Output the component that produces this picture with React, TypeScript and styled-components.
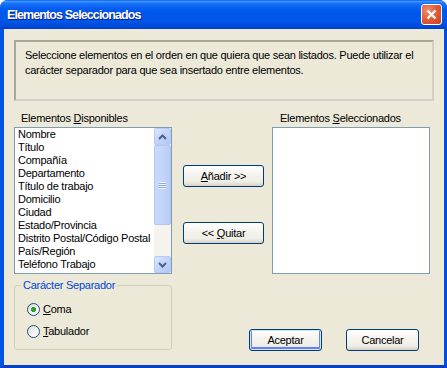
import styled, { createGlobalStyle } from 'styled-components';

const GlobalStyle = createGlobalStyle`
    html, body {
        margin: 0;
        padding: 0;
        background: #ffffff;
    }
    body {
        font-family: "Liberation Sans", Arial, sans-serif;
        font-size: 11px;
        letter-spacing: -0.25px;
        color: #000000;
    }
`;

const available = [
    'Nombre',
    'Título',
    'Compañía',
    'Departamento',
    'Título de trabajo',
    'Domicilio',
    'Ciudad',
    'Estado/Provincia',
    'Distrito Postal/Código Postal',
    'País/Región',
    'Teléfono Trabajo',
];

const Chevron: React.FC<{ down?: boolean }> = ({ down }) => (
    <svg width="9" height="6" viewBox="0 0 9 6">
        <path
            d={down ? 'M1 1 L4.5 4.5 L8 1' : 'M1 5 L4.5 1.5 L8 5'}
            fill="none"
            stroke="#4D6185"
            strokeWidth="2"
        />
    </svg>
);

const App: React.FC = () => {
    return (
        <>
            <GlobalStyle />
            <Window>
                <TitleBar>
                    <TitleText>Elementos Seleccionados</TitleText>
                    <CloseButton>
                        <svg width="11" height="11" viewBox="0 0 11 11">
                            <path d="M1.5 1.5 L9.5 9.5 M9.5 1.5 L1.5 9.5" stroke="#fff" strokeWidth="2.2" />
                        </svg>
                    </CloseButton>
                </TitleBar>
                <Body>
                    <Description>
                        Seleccione elementos en el orden en que quiera que sean listados. Puede utilizar el
                        carácter separador para que sea insertado entre elementos.
                    </Description>
                    <Grid>
                        <Label $indent={7}>
                            Elementos <u>D</u>isponibles
                        </Label>
                        <span />
                        <Label $indent={8}>
                            Elementos <u>S</u>eleccionados
                        </Label>

                        <ListBox>
                            <Items>
                                {available.map((item) => (
                                    <Item key={item}>{item}</Item>
                                ))}
                            </Items>
                            <ScrollBar>
                                <ScrollButton>
                                    <Chevron />
                                </ScrollButton>
                                <Track>
                                    <Thumb>
                                        <Grip />
                                    </Thumb>
                                </Track>
                                <ScrollButton>
                                    <Chevron down />
                                </ScrollButton>
                            </ScrollBar>
                        </ListBox>
                        <MoveButtons>
                            <Button $width={81}>
                                <span>
                                    <u>A</u>ñadir &gt;&gt;
                                </span>
                            </Button>
                            <Button $width={81}>
                                <span>
                                    &lt;&lt; <u>Q</u>uitar
                                </span>
                            </Button>
                        </MoveButtons>
                        <ListBox />

                        <GroupBox>
                            <Legend>Carácter Separador</Legend>
                            <RadioRow>
                                <Radio $checked />
                                <span>
                                    <u>C</u>oma
                                </span>
                            </RadioRow>
                            <RadioRow>
                                <Radio />
                                <span>
                                    <u>T</u>abulador
                                </span>
                            </RadioRow>
                        </GroupBox>
                        <DialogButtons>
                            <Button $width={73} $default>
                                Aceptar
                            </Button>
                            <Button $width={73}>Cancelar</Button>
                        </DialogButtons>
                    </Grid>
                </Body>
            </Window>
        </>
    );
};

export default App;

const Window = styled.div`
    width: 447px;
    height: 368px;
    display: flex;
    flex-direction: column;
    background: #0054e3;
    border-radius: 8px 8px 0 0;
    overflow: hidden;
`;

const TitleBar = styled.div`
    height: 29px;
    flex-shrink: 0;
    display: flex;
    align-items: center;
    justify-content: space-between;
    padding: 0 5px 0 7px;
    background: linear-gradient(
        to bottom,
        #0a5df0 0%,
        #3d95ff 5%,
        #1a72fa 12%,
        #0058ee 35%,
        #0055e6 75%,
        #0048d8 92%,
        #003dc8 100%
    );
`;

const TitleText = styled.span`
    font-family: "Liberation Sans", Arial, sans-serif;
    font-weight: bold;
    font-size: 12.5px;
    letter-spacing: -0.9px;
    color: #ffffff;
    text-shadow: 1px 1px 0 #0a1e8c;
`;

const CloseButton = styled.div`
    width: 19px;
    height: 19px;
    display: flex;
    align-items: center;
    justify-content: center;
    border: 1px solid #ffffff;
    border-radius: 3px;
    background: radial-gradient(circle at 30% 30%, #f08f70 0%, #e35d3b 45%, #c9411f 100%);
`;

const Body = styled.div`
    flex: 1;
    background: #ece9d8;
    border-left: 4px solid #0054e3;
    border-right: 3px solid #0050dc;
    border-bottom: 3px solid #0a3fc8;
    padding: 11px 10px 0 10px;
    display: flex;
    flex-direction: column;
`;

const Description = styled.div`
    height: 51px;
    border: 2px solid #aca899;
    border-right-color: #d4d0c8;
    border-bottom-color: #d4d0c8;
    padding: 6px 8px 0 9px;
    line-height: 15px;
`;

const Grid = styled.div`
    display: grid;
    grid-template-columns: 158px 100px 158px;
    grid-template-rows: auto 147px auto;
`;

const Label = styled.div<{ $indent: number }>`
    padding-left: ${({ $indent }) => $indent}px;
    margin-top: 10px;
    margin-bottom: 2px;
    line-height: 14px;
    height: 14px;
`;

const ListBox = styled.div`
    display: flex;
    background: #ffffff;
    border: 1px solid #7f9db9;
`;

const Items = styled.div`
    flex: 1;
    padding: 0 0 0 3px;
    overflow: hidden;
    white-space: nowrap;
`;

const Item = styled.div`
    height: 13px;
    line-height: 13px;
`;

const ScrollBar = styled.div`
    width: 17px;
    display: flex;
    flex-direction: column;
    background: #f4f3ee;
`;

const ScrollButton = styled.div`
    height: 17px;
    box-sizing: border-box;
    display: flex;
    align-items: center;
    justify-content: center;
    border: 1px solid #b7caf5;
    border-radius: 2px;
    background: linear-gradient(135deg, #dce8fe 0%, #c1d3fb 50%, #b4c8f6 100%);
`;

const Track = styled.div`
    flex: 1;
    display: flex;
    flex-direction: column;
`;

const Thumb = styled.div`
    height: 80px;
    box-sizing: border-box;
    display: flex;
    align-items: center;
    justify-content: center;
    border: 1px solid #b1c6f4;
    border-radius: 2px;
    background: linear-gradient(to right, #c9d8fc 0%, #c4d4fc 50%, #b9cdf8 100%);
`;

const Grip = styled.div`
    width: 7px;
    height: 7px;
    background: repeating-linear-gradient(
        to bottom,
        #eef4fe 0px,
        #eef4fe 1px,
        #8caae6 1px,
        #8caae6 2px
    );
`;

const MoveButtons = styled.div`
    display: flex;
    flex-direction: column;
    align-items: flex-start;
    padding: 38px 0 0 11px;
    gap: 35px;
`;

const Button = styled.div<{ $width: number; $default?: boolean }>`
    width: ${({ $width }) => $width}px;
    height: 22px;
    box-sizing: border-box;
    display: flex;
    align-items: center;
    justify-content: center;
    white-space: pre;
    border: 1px solid #003c74;
    border-radius: 3px;
    background: linear-gradient(to bottom, #ffffff 0%, #f5f4ef 40%, #eeede6 80%, #d6d0c5 100%);
    box-shadow: ${({ $default }) =>
        $default ? 'inset 0 0 0 1px #cee7ff, inset 0 -1px 0 2px #6982ee' : 'none'};
`;

const GroupBox = styled.div`
    position: relative;
    margin-top: 11px;
    height: 65px;
    box-sizing: border-box;
    border: 1px solid #d0d0bf;
    border-radius: 3px;
    padding: 17px 0 0 12px;
    display: flex;
    flex-direction: column;
    gap: 9px;
`;

const Legend = styled.span`
    position: absolute;
    top: -8px;
    left: 6px;
    padding: 0 2px;
    background: #ece9d8;
    color: #0046d5;
    line-height: 14px;
`;

const RadioRow = styled.div`
    display: flex;
    align-items: center;
    gap: 3px;
    height: 13px;
    line-height: 13px;
`;

const Radio = styled.div<{ $checked?: boolean }>`
    width: 13px;
    height: 13px;
    box-sizing: border-box;
    border-radius: 50%;
    border: 1px solid #1c5180;
    background: ${({ $checked }) =>
        $checked
            ? 'radial-gradient(circle, #2fa82f 0px, #21a121 2.2px, transparent 2.8px), linear-gradient(135deg, #dcdcd6 0%, #ffffff 80%)'
            : 'linear-gradient(135deg, #dcdcd6 0%, #ffffff 80%)'};
`;

const DialogButtons = styled.div`
    grid-column: span 2;
    display: flex;
    justify-content: flex-end;
    align-items: flex-start;
    gap: 24px;
    padding: 55px 11px 0 0;
`;
